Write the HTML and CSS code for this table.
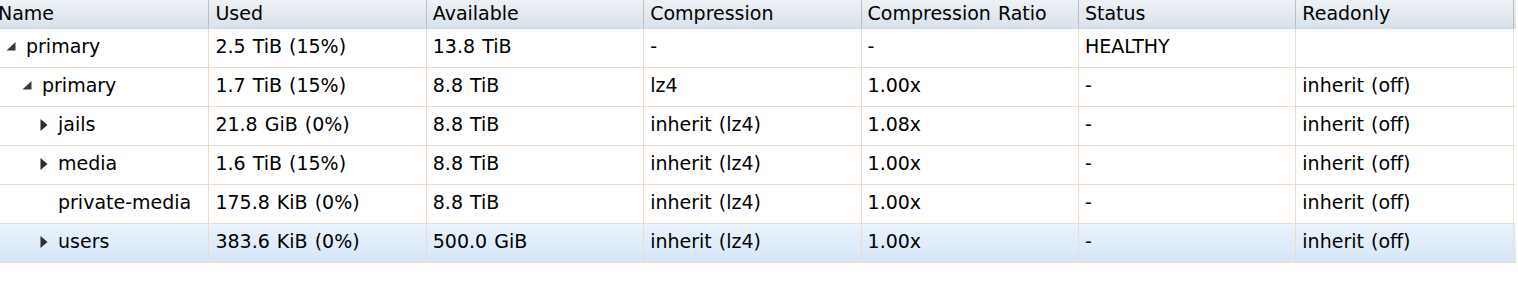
FILE: index.html
```html
<!DOCTYPE html>
<html>
<head>
<meta charset="utf-8">
<link rel="stylesheet" href="styles.css">
</head>
<body>
<div class="grid">
  <div class="row head">
    <div class="cell">Name</div>
    <div class="cell">Used</div>
    <div class="cell">Available</div>
    <div class="cell">Compression</div>
    <div class="cell">Compression Ratio</div>
    <div class="cell">Status</div>
    <div class="cell">Readonly</div>
  </div>
  <div class="row">
    <div class="cell tree lvl0"><span class="exp"><svg width="10" height="9" viewBox="0 0 10 9"><polygon points="9.5,0 9.5,8.5 0.5,8.5" fill="#3a3a3a"/></svg></span><span>primary</span></div>
    <div class="cell">2.5 TiB (15%)</div>
    <div class="cell">13.8 TiB</div>
    <div class="cell">-</div>
    <div class="cell">-</div>
    <div class="cell">HEALTHY</div>
    <div class="cell"></div>
  </div>
  <div class="row">
    <div class="cell tree lvl1"><span class="exp"><svg width="10" height="9" viewBox="0 0 10 9"><polygon points="9.5,0 9.5,8.5 0.5,8.5" fill="#3a3a3a"/></svg></span><span>primary</span></div>
    <div class="cell">1.7 TiB (15%)</div>
    <div class="cell">8.8 TiB</div>
    <div class="cell">lz4</div>
    <div class="cell">1.00x</div>
    <div class="cell">-</div>
    <div class="cell">inherit (off)</div>
  </div>
  <div class="row">
    <div class="cell tree lvl2"><span class="exp"><svg width="8" height="12" viewBox="0 0 8 12"><polygon points="0.5,0 7.5,6 0.5,12" fill="#2e2e2e"/></svg></span><span>jails</span></div>
    <div class="cell">21.8 GiB (0%)</div>
    <div class="cell">8.8 TiB</div>
    <div class="cell">inherit (lz4)</div>
    <div class="cell">1.08x</div>
    <div class="cell">-</div>
    <div class="cell">inherit (off)</div>
  </div>
  <div class="row">
    <div class="cell tree lvl2"><span class="exp"><svg width="8" height="12" viewBox="0 0 8 12"><polygon points="0.5,0 7.5,6 0.5,12" fill="#2e2e2e"/></svg></span><span>media</span></div>
    <div class="cell">1.6 TiB (15%)</div>
    <div class="cell">8.8 TiB</div>
    <div class="cell">inherit (lz4)</div>
    <div class="cell">1.00x</div>
    <div class="cell">-</div>
    <div class="cell">inherit (off)</div>
  </div>
  <div class="row">
    <div class="cell tree lvl2"><span class="exp"></span><span>private-media</span></div>
    <div class="cell">175.8 KiB (0%)</div>
    <div class="cell">8.8 TiB</div>
    <div class="cell">inherit (lz4)</div>
    <div class="cell">1.00x</div>
    <div class="cell">-</div>
    <div class="cell">inherit (off)</div>
  </div>
  <div class="row selected">
    <div class="cell tree lvl2"><span class="exp"><svg width="8" height="12" viewBox="0 0 8 12"><polygon points="0.5,0 7.5,6 0.5,12" fill="#2e2e2e"/></svg></span><span>users</span></div>
    <div class="cell">383.6 KiB (0%)</div>
    <div class="cell">500.0 GiB</div>
    <div class="cell">inherit (lz4)</div>
    <div class="cell">1.00x</div>
    <div class="cell">-</div>
    <div class="cell">inherit (off)</div>
  </div>
</div>
</body>
</html>
```

FILE: styles.css
```css
html, body {
  margin: 0;
  padding: 0;
  background: #fff;
  overflow: hidden;
}

.grid {
  margin-left: -8px;
  width: 1524px;
  font-family: "DejaVu Sans", Verdana, sans-serif;
  font-size: 19px;
  color: #000;
  word-spacing: 1px;
}

.row {
  display: flex;
  height: 39px;
  border-bottom: 1px solid #eedccb;
  box-sizing: border-box;
}

.cell {
  width: 217.4px;
  flex: none;
  box-sizing: border-box;
  border-right: 1px solid #eedccb;
  padding-left: 6px;
  padding-bottom: 3px;
  line-height: 35px;
  white-space: nowrap;
  overflow: hidden;
}

.row.head {
  height: 29px;
  background: linear-gradient(#eef2f6, #d8e1ea);
  border-bottom: 1px solid #d2dbe5;
}

.row.head .cell {
  line-height: 27px;
  padding-bottom: 1px;
  border-right-color: #b9c0c8;
}

.row.selected {
  background: linear-gradient(#eaf3fd, #d6e6f7);
}

.tree {
  display: flex;
  align-items: center;
}

.tree.lvl0 { padding-left: 13px; }
.tree.lvl1 { padding-left: 29px; }
.tree.lvl2 { padding-left: 46px; }

.exp {
  width: 11px;
  height: 12px;
  flex: none;
  margin-right: 10px;
  display: flex;
  align-items: center;
  justify-content: center;
}

.tree.lvl2 .exp {
  margin-right: 9px;
}

.exp svg {
  display: block;
}
```
